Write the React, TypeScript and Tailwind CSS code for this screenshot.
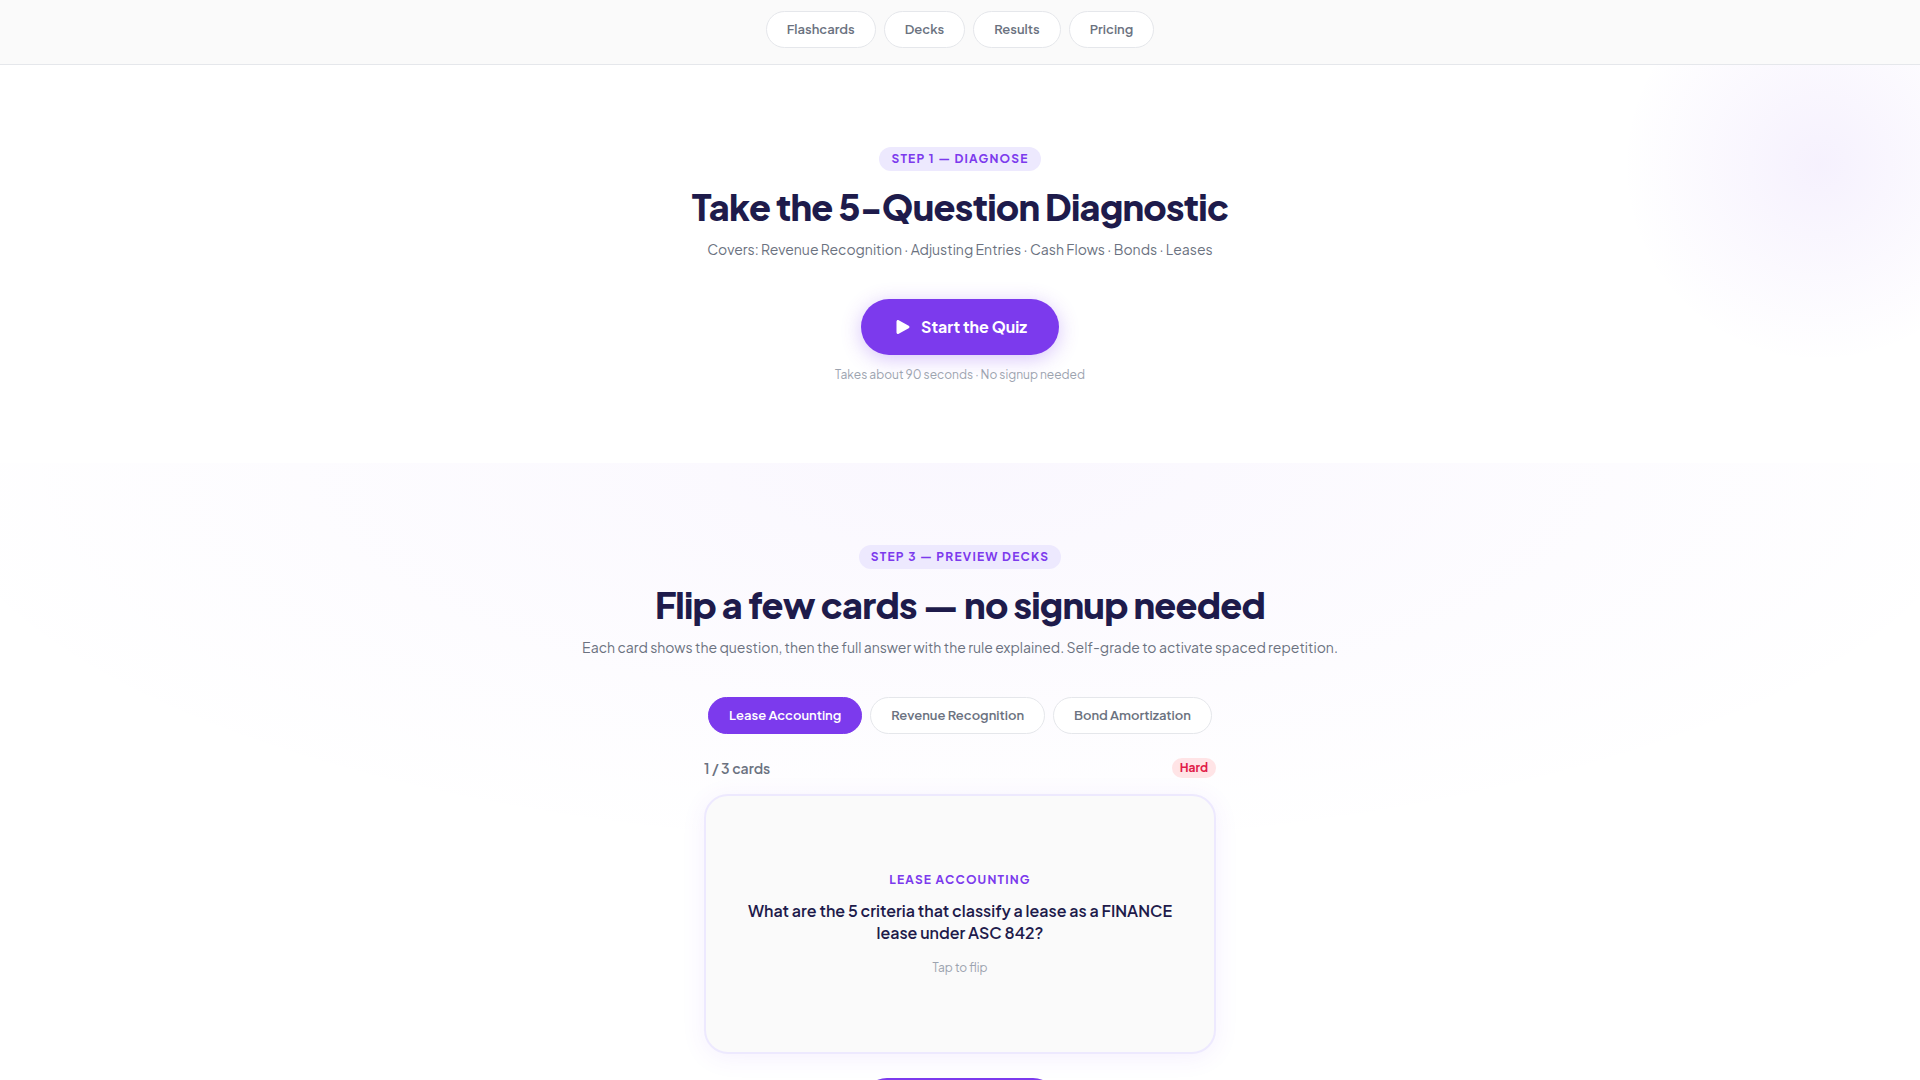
import { useState } from "react";

const navLinks = [
  { label: "Flashcards", href: "#flashcards" },
  { label: "Decks", href: "#decks" },
  { label: "Results", href: "#results" },
  { label: "Pricing", href: "#pricing" },
];

const decks = ["Lease Accounting", "Revenue Recognition", "Bond Amortization"];

const SectionHeading = ({ step, title, text }: { step: string; title: string; text: string }) => (
  <div className="flex flex-col items-center pt-0.5 text-center">
    <span className="rounded-full bg-[#ede9fe] px-3 text-[12px] leading-6 font-bold tracking-widest text-[#7c3aed] uppercase">
      {step}
    </span>
    <h2 className="mt-3 text-[36px] leading-12 font-extrabold tracking-[-0.02em] text-[#1e1b4b]">{title}</h2>
    <p className="mt-1.5 text-[14px] leading-6 text-[#6b7280]">{text}</p>
  </div>
);

const App = () => {
  const [activeDeck, setActiveDeck] = useState(decks[0]);

  return (
    <div className="min-h-screen bg-white font-['Plus_Jakarta_Sans',Inter,sans-serif] antialiased">
      {/* Nav */}
      <header className="border-b border-gray-200 bg-[#fafafa] pt-[11px] pb-4">
        <nav className="flex justify-center gap-2">
          {navLinks.map(link => (
            <a
              key={link.label}
              href={link.href}
              className="rounded-full border border-gray-200 bg-white px-5 py-2 text-[13px] leading-[19px] font-semibold text-[#6b7280]"
            >
              {link.label}
            </a>
          ))}
        </nav>
      </header>

      {/* Diagnostic */}
      <section className="relative flex flex-col items-center overflow-hidden px-6 py-20">
        <div className="pointer-events-none absolute -top-[100px] -right-[100px] size-[400px] bg-[radial-gradient(circle,rgba(124,58,237,0.07),transparent_70%)]"></div>
        <SectionHeading
          step="Step 1 — Diagnose"
          title="Take the 5-Question Diagnostic"
          text="Covers: Revenue Recognition · Adjusting Entries · Cash Flows · Bonds · Leases"
        />
        <button className="mt-[38px] flex h-14 items-center gap-2 rounded-full bg-[#7c3aed] px-8 text-base font-bold text-white shadow-[0_4px_20px_rgba(124,58,237,0.3)]">
          <svg viewBox="0 0 20 20" className="size-5" fill="currentColor" aria-hidden="true">
            <path d="M3.500 4.500v11c0 1.200 1.200 1.900 2.200 1.300l10-5.500c1-.6 1-2 0-2.600l-10-5.500C4.700 2.600 3.500 3.300 3.500 4.500z" />
          </svg>
          Start the Quiz
        </button>
        <p className="mt-3 text-xs text-[#9ca3af]">Takes about 90 seconds · No signup needed</p>
      </section>

      {/* Deck preview */}
      <section className="flex flex-col items-center bg-[radial-gradient(ellipse_1080px_400px_at_top,rgba(124,58,237,0.04),transparent)] px-6 py-20">
        <SectionHeading
          step="Step 3 — Preview Decks"
          title="Flip a few cards — no signup needed"
          text="Each card shows the question, then the full answer with the rule explained. Self-grade to activate spaced repetition."
        />
        <div className="mt-[38px] flex gap-2">
          {decks.map(deck => (
            <button
              key={deck}
              onClick={() => setActiveDeck(deck)}
              className={`rounded-full border px-5 py-2 text-[13px] leading-[19px] font-semibold ${
                activeDeck === deck
                  ? "border-[#7c3aed] bg-[#7c3aed] text-white"
                  : "border-gray-200 bg-white text-[#6b7280]"
              }`}
            >
              {deck}
            </button>
          ))}
        </div>

        <div className="mt-6 w-full max-w-lg">
          <div className="flex items-start justify-between">
            <span className="text-sm font-semibold text-[#6b7280]">1 / 3 cards</span>
            <span className="rounded-full bg-[#ffe4e6] px-2 text-[12px] leading-5 font-bold text-[#e11d48]">Hard</span>
          </div>
          <button className="mt-4 flex min-h-65 w-full flex-col items-center justify-center rounded-3xl border-2 border-[#ede9fe] bg-[#fafafa] px-8 text-center shadow-[0_4px_24px_rgba(124,58,237,0.08)]">
            <span className="text-[12px] leading-4 font-bold tracking-widest text-[#7c3aed] uppercase">{activeDeck}</span>
            <span className="mt-3 text-base leading-[22px] font-semibold text-[#1e1b4b]">
              What are the 5 criteria that classify a lease as a FINANCE lease under ASC 842?
            </span>
            <span className="mt-4 text-xs text-[#9ca3af]">Tap to flip</span>
          </button>
          <div className="mt-6 flex justify-center">
            <button className="h-12 rounded-full bg-[#7c3aed] px-11 text-base font-bold text-white">Show Answer</button>
          </div>
        </div>
      </section>
    </div>
  );
};

export default App;
